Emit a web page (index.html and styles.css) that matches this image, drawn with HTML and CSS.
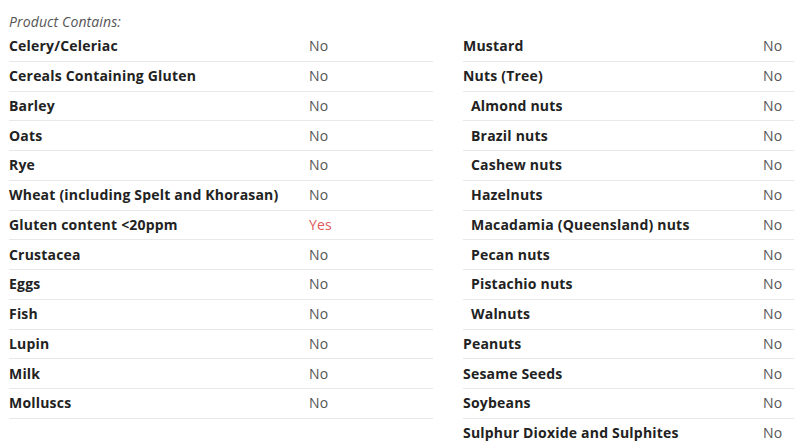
FILE: index.html
```html
<!DOCTYPE html>
<html>
<head>
<meta charset="utf-8">
<link rel="stylesheet" href="styles.css">
</head>
<body>
<div class="page">
  <div class="heading">Product Contains:</div>
  <div class="columns">
    <div class="col col-left">
      <div class="row"><span class="label">Celery/Celeriac</span><span class="val">No</span></div>
      <div class="row"><span class="label">Cereals Containing Gluten</span><span class="val">No</span></div>
      <div class="row"><span class="label">Barley</span><span class="val">No</span></div>
      <div class="row"><span class="label">Oats</span><span class="val">No</span></div>
      <div class="row"><span class="label">Rye</span><span class="val">No</span></div>
      <div class="row"><span class="label">Wheat (including Spelt and Khorasan)</span><span class="val">No</span></div>
      <div class="row"><span class="label">Gluten content &lt;20ppm</span><span class="val yes">Yes</span></div>
      <div class="row"><span class="label">Crustacea</span><span class="val">No</span></div>
      <div class="row"><span class="label">Eggs</span><span class="val">No</span></div>
      <div class="row"><span class="label">Fish</span><span class="val">No</span></div>
      <div class="row"><span class="label">Lupin</span><span class="val">No</span></div>
      <div class="row"><span class="label">Milk</span><span class="val">No</span></div>
      <div class="row"><span class="label">Molluscs</span><span class="val">No</span></div>
    </div>
    <div class="col col-right">
      <div class="row"><span class="label">Mustard</span><span class="val">No</span></div>
      <div class="row"><span class="label">Nuts (Tree)</span><span class="val">No</span></div>
      <div class="row sub"><span class="label">Almond nuts</span><span class="val">No</span></div>
      <div class="row sub"><span class="label">Brazil nuts</span><span class="val">No</span></div>
      <div class="row sub"><span class="label">Cashew nuts</span><span class="val">No</span></div>
      <div class="row sub"><span class="label">Hazelnuts</span><span class="val">No</span></div>
      <div class="row sub"><span class="label">Macadamia (Queensland) nuts</span><span class="val">No</span></div>
      <div class="row sub"><span class="label">Pecan nuts</span><span class="val">No</span></div>
      <div class="row sub"><span class="label">Pistachio nuts</span><span class="val">No</span></div>
      <div class="row sub"><span class="label">Walnuts</span><span class="val">No</span></div>
      <div class="row"><span class="label">Peanuts</span><span class="val">No</span></div>
      <div class="row"><span class="label">Sesame Seeds</span><span class="val">No</span></div>
      <div class="row"><span class="label">Soybeans</span><span class="val">No</span></div>
      <div class="row"><span class="label">Sulphur Dioxide and Sulphites</span><span class="val">No</span></div>
    </div>
  </div>
</div>
</body>
</html>
```
FILE: styles.css
```css
html, body {
  margin: 0;
  padding: 0;
  background: #ffffff;
  overflow: hidden;
}
body {
  font-family: "Open Sans", "Liberation Sans", sans-serif;
  font-size: 14px;
  color: #222;
}
.page {
  padding: 11px 0 0 9px;
}
.heading {
  font-style: italic;
  color: #555;
  line-height: 21px;
  height: 21px;
  letter-spacing: 0.12px;
}
.columns {
  display: grid;
  grid-template-columns: 424px 1fr;
  column-gap: 30px;
}
.col {
  display: flex;
  flex-direction: column;
}
.row {
  display: flex;
  align-items: center;
  height: 29.75px;
  box-sizing: border-box;
  border-bottom: 1px solid #e8e8e8;
  line-height: 20px;
}
.label {
  width: 300px;
  flex: none;
  font-weight: 700;
  color: #222;
  letter-spacing: 0.2px;
}
.sub .label {
  padding-left: 8px;
  width: 292px;
}
.val {
  color: #555;
  font-weight: 400;
  letter-spacing: 0.1px;
}
.val.yes {
  color: #e05a5a;
}
```
